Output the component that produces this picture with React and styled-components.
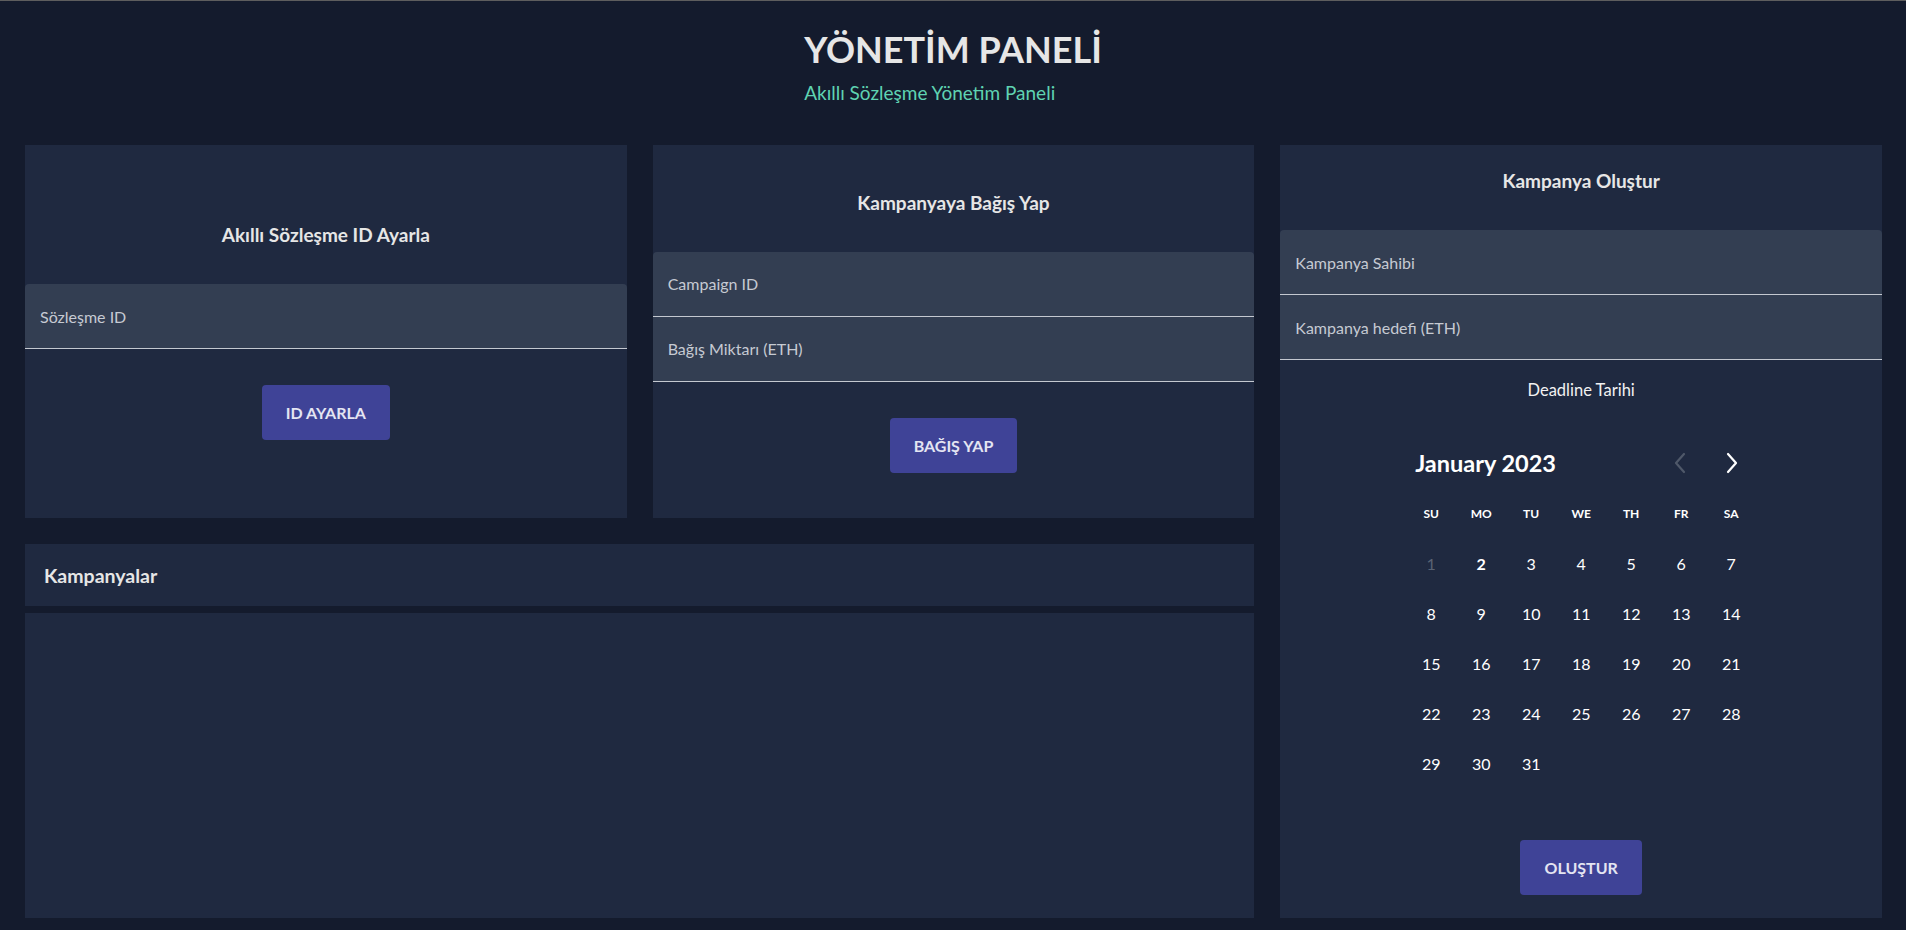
import React from 'react'
import styled, { createGlobalStyle } from 'styled-components'

const GlobalStyle = createGlobalStyle`
  html, body {
    margin: 0;
    padding: 0;
    background: #141b2d;
    font-family: Lato, "Noto Sans", sans-serif;
    color: #e6e6e6;
  }
  * { box-sizing: border-box; }
`

const Page = styled.div`
  min-height: 100vh;
  border-top: 1px solid #5e5e5e;
  display: flex;
  flex-direction: column;
`

const Header = styled.header`
  display: flex;
  justify-content: center;
  height: 144px;
`

const HeaderText = styled.div`
  display: flex;
  flex-direction: column;
  padding-top: 26px;
`

const Title = styled.h1`
  margin: 0;
  font-size: 36px;
  line-height: 44px;
  font-weight: 700;
  color: #e6e6e6;
`

const Subtitle = styled.p`
  margin: 10px 0 0;
  font-size: 19px;
  line-height: 24px;
  color: #5fd3b2;
`

const Grid = styled.main`
  display: grid;
  grid-template-columns: repeat(3, 1fr);
  grid-template-rows: 373px 374px;
  gap: 26px;
  padding: 0 24px 12px 25px;
`

const Card = styled.section`
  background: #1f2940;
  display: flex;
  flex-direction: column;
  justify-content: ${p => (p.$top ? 'flex-start' : 'center')};
  padding-top: ${p => (p.$top ? '24px' : '0')};
  grid-row: ${p => p.$tall ? 'span 2' : 'auto'};
`

const CardTitle = styled.h2`
  margin: 0 0 37px;
  text-align: center;
  font-size: 19px;
  line-height: 24px;
  font-weight: 700;
  color: #e6e6e6;
`

const Input = styled.input`
  display: block;
  width: 100%;
  height: 65px;
  padding: 0 15px;
  border: none;
  border-bottom: 1px solid #c4c8d0;
  border-radius: ${p => (p.$first ? '4px 4px 0 0' : '0')};
  background: #333e52;
  font-family: inherit;
  font-size: 16px;
  color: #e6e6e6;
  outline: none;
  &::placeholder { color: #c6cad2; }
`

const Button = styled.button`
  align-self: center;
  margin-top: 36px;
  height: 55px;
  padding: 0 24px;
  border: none;
  border-radius: 4px;
  background: #3f4397;
  color: #e4e5f2;
  font-family: inherit;
  font-size: 16px;
  font-weight: 700;
  letter-spacing: 0;
  cursor: pointer;
`

const DeadlineLabel = styled.div`
  margin-top: 19px;
  text-align: center;
  font-size: 16.5px;
  line-height: 22px;
  color: #f2f2f2;
`

const Calendar = styled.div`
  width: 350px;
  margin: 47px auto 0;
`

const CalHeader = styled.div`
  display: flex;
  align-items: center;
  justify-content: space-between;
  height: 30px;
  padding: 0 6px 0 9px;
`

const MonthLabel = styled.span`
  font-size: 23.5px;
  font-weight: 700;
  color: #ffffff;
`

const Arrows = styled.div`
  display: flex;
  gap: 16px;
`

const ArrowButton = styled.button`
  width: 36px;
  height: 30px;
  display: flex;
  align-items: center;
  justify-content: center;
  border: none;
  background: transparent;
  padding: 0;
  color: ${p => (p.disabled ? '#4f5869' : '#ffffff')};
`

const Week = styled.div`
  display: grid;
  grid-template-columns: repeat(7, 50px);
  margin-top: ${p => (p.$head ? '10px' : '0')};
`

const Cell = styled.div`
  height: 50px;
  display: flex;
  align-items: center;
  justify-content: center;
  font-size: ${p => (p.$head ? '12px' : '16px')};
  font-weight: ${p => (p.$head || p.$today ? 700 : 400)};
  color: ${p => (p.$muted ? '#5a6374' : '#ffffff')};
`

const CreateButton = styled(Button)`
  margin-top: 52px;
`

const ListHeader = styled.div`
  grid-column: span 2;
  display: flex;
  flex-direction: column;
  gap: 7px;
`

const ListTitleBar = styled.div`
  height: 62px;
  background: #1f2940;
  display: flex;
  align-items: center;
  padding-left: 19px;
  font-size: 19.5px;
  font-weight: 700;
  color: #e6e6e6;
`

const ListBody = styled.div`
  flex: 1;
  background: #1f2940;
`

const Chevron = ({ dir }) => (
  <svg width="14" height="22" viewBox="0 0 14 22" fill="none">
    <path
      d={dir === 'left' ? 'M11 2 L3 11 L11 20' : 'M3 2 L11 11 L3 20'}
      stroke="currentColor"
      strokeWidth="2.2"
      strokeLinecap="round"
      strokeLinejoin="round"
    />
  </svg>
)

const weekdays = ['SU', 'MO', 'TU', 'WE', 'TH', 'FR', 'SA']

const buildWeeks = () => {
  const weeks = []
  let day = 1
  while (day <= 31) {
    const week = []
    for (let i = 0; i < 7; i++) {
      week.push(day <= 31 ? day : null)
      day++
    }
    weeks.push(week)
  }
  return weeks
}

const App = () => {
  const weeks = buildWeeks()
  return (
    <>
      <GlobalStyle />
      <Page>
        <Header>
          <HeaderText>
            <Title>YÖNETİM PANELİ</Title>
            <Subtitle>Akıllı Sözleşme Yönetim Paneli</Subtitle>
          </HeaderText>
        </Header>

        <Grid>
          <Card>
            <CardTitle>Akıllı Sözleşme ID Ayarla</CardTitle>
            <Input $first placeholder="Sözleşme ID" />
            <Button>ID AYARLA</Button>
          </Card>

          <Card>
            <CardTitle>Kampanyaya Bağış Yap</CardTitle>
            <Input $first placeholder="Campaign ID" />
            <Input placeholder="Bağış Miktarı (ETH)" />
            <Button>BAĞIŞ YAP</Button>
          </Card>

          <Card $tall $top>
            <CardTitle>Kampanya Oluştur</CardTitle>
            <Input $first placeholder="Kampanya Sahibi" />
            <Input placeholder="Kampanya hedefi (ETH)" />
            <DeadlineLabel>Deadline Tarihi</DeadlineLabel>
            <Calendar>
              <CalHeader>
                <MonthLabel>January 2023</MonthLabel>
                <Arrows>
                  <ArrowButton disabled><Chevron dir="left" /></ArrowButton>
                  <ArrowButton><Chevron dir="right" /></ArrowButton>
                </Arrows>
              </CalHeader>
              <Week $head>
                {weekdays.map(w => <Cell key={w} $head>{w}</Cell>)}
              </Week>
              {weeks.map((week, i) => (
                <Week key={i}>
                  {week.map((d, j) => (
                    <Cell key={j} $muted={d === 1} $today={d === 2}>{d}</Cell>
                  ))}
                </Week>
              ))}
            </Calendar>
            <CreateButton>OLUŞTUR</CreateButton>
          </Card>

          <ListHeader>
            <ListTitleBar>Kampanyalar</ListTitleBar>
            <ListBody />
          </ListHeader>
        </Grid>
      </Page>
    </>
  )
}

export default App
